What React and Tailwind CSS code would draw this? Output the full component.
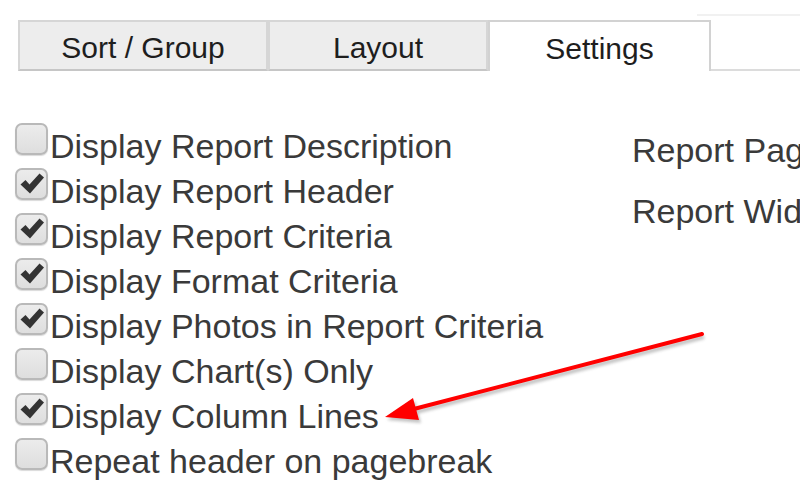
import React, { useState } from 'react';

const options = [
  { label: 'Display Report Description', checked: false },
  { label: 'Display Report Header', checked: true },
  { label: 'Display Report Criteria', checked: true },
  { label: 'Display Format Criteria', checked: true },
  { label: 'Display Photos in Report Criteria', checked: true },
  { label: 'Display Chart(s) Only', checked: false },
  { label: 'Display Column Lines', checked: true },
  { label: 'Repeat header on pagebreak', checked: false },
];

const tabs = [
  { name: 'Sort / Group', w: 'w-[250px]' },
  { name: 'Layout', w: 'w-[220px]' },
  { name: 'Settings', w: 'w-[223px]' },
];

const Box = ({ checked, onClick }) => (
  <button
    type="button"
    onClick={onClick}
    className="w-[33px] h-[32px] shrink-0 rounded-[7px] border-2 border-[#b9b9b9] bg-gradient-to-b from-[#ececec] to-[#dedede] shadow-[0_1px_1px_rgba(0,0,0,0.15)] flex items-center justify-center"
  >
    {checked && (
      <svg width="26" height="24" viewBox="0 0 26 24">
        <path d="M1.5 12.5 L6.5 8 L10.5 12.5 L20.5 1.5 L25 5.5 L11 21.5 Z" fill="#333" />
      </svg>
    )}
  </button>
);

export default function App() {
  const [tab, setTab] = useState('Settings');
  const [checks, setChecks] = useState(options.map((o) => o.checked));

  return (
    <div className="relative w-[800px] h-[490px] bg-white overflow-hidden font-['Liberation_Sans',Arial,sans-serif]">
      {/* tab strip */}
      <div className="flex pt-[20px] pl-[18px]">
        {tabs.map((t) => {
          const active = tab === t.name;
          return (
            <button
              key={t.name}
              type="button"
              onClick={() => setTab(t.name)}
              className={
                active
                  ? `${t.w} h-[51px] bg-white border-2 border-b-0 border-[#d2d2d2] text-[30px] text-[#1e1e1e] pt-[3px]`
                  : `${t.w} h-[51px] bg-[#ededed] border-2 border-[#d6d6d6] border-b-[#c6c6c6] text-[30px] text-[#1e1e1e] pt-[3px]`
              }
            >
              {t.name}
            </button>
          );
        })}
        <div className="flex-1 flex flex-col justify-between -mt-[6px] ml-[-14px]">
          <div className="h-[2px] bg-[#f1f1f1]" />
          <div className="h-[2px] bg-[#dcdcdc] ml-[14px]" />
        </div>
      </div>

      <div className="flex mt-[52px]">
        <div className="pl-[15px] w-[632px] shrink-0">
          {options.map((o, i) => (
            <div key={o.label} className="flex items-start h-[45px]">
              <Box
                checked={checks[i]}
                onClick={() => setChecks(checks.map((c, j) => (j === i ? !c : c)))}
              />
              <span className="ml-[2px] mt-[1px] text-[34px] leading-[45px] text-[#3a3a3a] whitespace-nowrap">
                {o.label}
              </span>
            </div>
          ))}
        </div>
        <div className="pt-[5px] text-[34px] leading-[45px] text-[#3a3a3a] whitespace-nowrap">
          <div className="h-[61px]">Report Page Size</div>
          <div>Report Width</div>
        </div>
      </div>

      {/* annotation arrow */}
      <svg className="absolute left-0 top-0 pointer-events-none" width="800" height="490">
        <defs>
          <filter id="sh" x="-10%" y="-10%" width="120%" height="120%">
            <feGaussianBlur stdDeviation="1.5" />
          </filter>
        </defs>
        <g transform="translate(2,3)" opacity="0.35" filter="url(#sh)">
          <line x1="702" y1="334" x2="410" y2="410" stroke="#555" strokeWidth="4" />
          <polygon points="385,417 413,398 419,420" fill="#555" />
        </g>
        <line x1="702" y1="334" x2="410" y2="410" stroke="#ff0000" strokeWidth="4" strokeLinecap="round" />
        <polygon points="385,417 413,398 419,420" fill="#ff0000" />
      </svg>
    </div>
  );
}
